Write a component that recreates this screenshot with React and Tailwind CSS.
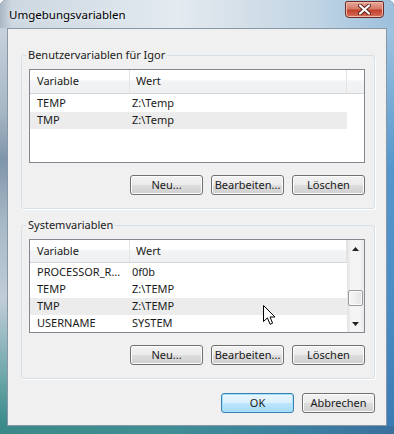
import React from "react";

const userVars = [
  { name: "TEMP", value: "Z:\\Temp" },
  { name: "TMP", value: "Z:\\Temp", selected: true },
];

const systemVars = [
  { name: "PROCESSOR_R...", value: "0f0b" },
  { name: "TEMP", value: "Z:\\TEMP" },
  { name: "TMP", value: "Z:\\TEMP", selected: true },
  { name: "USERNAME", value: "SYSTEM" },
];

function Btn({ children, primary }) {
  if (primary) {
    return (
      <button className="h-[20px] w-[73px] rounded-[3px] border border-[#3c7fb1] bg-[linear-gradient(to_bottom,#eaf6fd_0%,#d9f0fc_50%,#bee6fd_50%,#a7d9f5_100%)] shadow-[inset_0_0_0_1px_#9fe0fb] text-center leading-[18px] text-[#1a1a1a]">
        {children}
      </button>
    );
  }
  return (
    <button className="h-[20px] w-[73px] rounded-[3px] border border-[#707070] bg-[linear-gradient(to_bottom,#f2f2f2_0%,#ebebeb_50%,#dddddd_50%,#cfcfcf_100%)] shadow-[inset_0_0_0_1px_#fcfcfc] text-center leading-[18px] text-[#1a1a1a]">
      {children}
    </button>
  );
}

function Arrow({ down }) {
  return (
    <div className="h-[17px] flex items-center justify-center">
      <svg width="7" height="4" viewBox="0 0 7 4">
        {down ? <path d="M0 0 H7 L3.5 4 Z" fill="#222" /> : <path d="M0 4 H7 L3.5 0 Z" fill="#222" />}
      </svg>
    </div>
  );
}

function Scrollbar() {
  return (
    <div className="w-[17px] h-full flex flex-col bg-[linear-gradient(to_right,#e2e2e2,#f4f4f4_25%,#f4f4f4_75%,#e9e9e9)]">
      <Arrow />
      <div className="flex-1">
        <div className="mt-[33px] h-[16px] mx-[1px] rounded-[2px] border border-[#9a9a9a] bg-[linear-gradient(to_right,#f6f6f6,#e4e4e4)] shadow-[inset_0_0_0_1px_#fbfbfb]" />
      </div>
      <Arrow down />
    </div>
  );
}

function ListView({ rows, scroll }) {
  return (
    <div className="w-[336px] h-[94px] border border-[#828790] bg-white flex">
      <div className="flex-1 flex flex-col">
        <div className="h-[24px] flex border-b border-[#d5d5d5] bg-[linear-gradient(to_bottom,#ffffff_0%,#ffffff_45%,#f3f4f5_46%,#eef0f1_100%)]">
          <div className="w-[100px] border-r border-[#e3e3e3] pl-[7px] flex items-center">Variable</div>
          <div className="w-[217px] border-r border-[#e3e3e3] pl-[6px] flex items-center">Wert</div>
        </div>
        <div className="pt-[1px]">
          {rows.map((r) => (
            <div
              key={r.name}
              className={
                r.selected
                  ? "w-[317px] h-[17px] flex items-center bg-[#ececec]"
                  : "w-[317px] h-[17px] flex items-center"
              }
            >
              <div className="w-[100px] pl-[7px]">{r.name}</div>
              <div className="pl-[2px]">{r.value}</div>
            </div>
          ))}
        </div>
      </div>
      {scroll && <Scrollbar />}
    </div>
  );
}

function Group({ title, rows, scroll, className }) {
  return (
    <fieldset
      className={
        "ml-[13px] w-[354px] pl-[7px] pr-[9px] pb-[13px] rounded-[3px] border border-[#d5dfe5] shadow-[1px_1px_0_#ffffff] " +
        className
      }
    >
      <legend className="-ml-[3px] px-[2px] leading-[16px]">{title}</legend>
      <div className="mt-[6px]">
        <ListView rows={rows} scroll={scroll} />
      </div>
      <div className="mt-[12px] flex justify-end gap-[8px]">
        <Btn>Neu...</Btn>
        <Btn>Bearbeiten...</Btn>
        <Btn>Löschen</Btn>
      </div>
    </fieldset>
  );
}

export default function App() {
  return (
    <div className="relative w-[394px] h-[434px] flex flex-col overflow-hidden rounded-t-[6px] shadow-[inset_0_0_0_1px_#4b5e6e] font-['Noto_Sans',sans-serif] text-[11px] text-[#1a1a1a]">
      {/* title bar */}
      <div className="h-[28px] flex items-start bg-[linear-gradient(to_right,#a9b8c5_0%,#ccd7e0_3%,#d8e1e9_25%,#e4ebf1_45%,#d4dfe8_62%,#c0d4e4_80%,#9cbfdc_100%)]">
        <div className="pl-[9px] pt-[7px] leading-[16px] text-[11.5px] text-black [text-shadow:0_0_6px_#ffffff]">Umgebungsvariablen</div>
        <div className="ml-auto mr-[10px] mt-[1px] w-[39px] h-[17px] rounded-b-[4px] rounded-t-[2px] border border-[#6b2a22] bg-[linear-gradient(to_bottom,#e9a99b_0%,#d47a68_45%,#c2402c_55%,#d5705c_100%)] shadow-[inset_0_0_0_1px_#f0b9ac] flex items-center justify-center">
          <svg width="13" height="11" viewBox="0 0 13 11">
            <path d="M2 1.5 L11 9.5 M11 1.5 L2 9.5" stroke="#5a211a" strokeWidth="4" strokeLinecap="round" />
            <path d="M2 1.5 L11 9.5 M11 1.5 L2 9.5" stroke="#ffffff" strokeWidth="2.2" strokeLinecap="round" />
          </svg>
        </div>
      </div>

      {/* middle */}
      <div className="h-[398px] flex">
        <div className="w-[7px] bg-[linear-gradient(to_bottom,#c6d1db_0%,#a9b9c6_20%,#7e96aa_33%,#a6b7c5_48%,#c0cdd7_68%,#74aaae_86%,#3a8a8a_100%)]" />
        <div className="w-[380px] border border-[#8797a6] bg-[#f0f0f0] flex flex-col">
          <Group title="Benutzervariablen für Igor" rows={userVars} className="mt-[18px]" />
          <Group title="Systemvariablen" rows={systemVars} scroll className="mt-[8px]" />
          <div className="mt-[14px] pr-[11px] flex justify-end gap-[8px]">
            <Btn primary>OK</Btn>
            <Btn>Abbrechen</Btn>
          </div>
        </div>
        <div className="w-[7px] bg-[linear-gradient(to_bottom,#9fc3e0_0%,#5597cd_35%,#4a8cc4_70%,#3c7cb4_100%)]" />
      </div>

      {/* bottom frame */}
      <div className="h-[8px] bg-[linear-gradient(to_right,#3b8a88_0%,#3f8f94_40%,#3c7ea2_80%,#3a6f9e_100%)]" />

      {/* mouse cursor */}
      <svg className="absolute top-[305px] left-[263px]" width="13" height="21" viewBox="0 0 13 21">
        <path d="M0.5 0.5 L0.5 16.5 L4.4 12.9 L7.1 19.3 L9.6 18.2 L7 12 L12 12 Z" fill="#ffffff" stroke="#000000" strokeWidth="1" strokeLinejoin="round" />
      </svg>
    </div>
  );
}
